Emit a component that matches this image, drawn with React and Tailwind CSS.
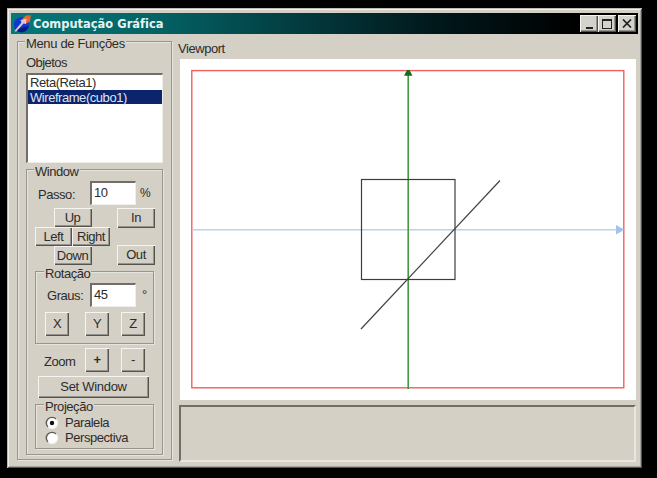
import React from "react";

const raised =
  "shadow-[inset_1px_1px_0_#f5f4f0,inset_-1px_-1px_0_#55534f,inset_-2px_-2px_0_#96938c]";

function Group({ label, className, labelClass, children }) {
  return (
    <div
      className={`flex shrink-0 flex-col items-start border border-[#98958e] shadow-[1px_1px_0_#e6e4de,inset_1px_1px_0_#e6e4de] ${className}`}
    >
      <div className={`-mt-[6px] h-4 bg-[#d4d0c6] leading-4 ${labelClass}`}>{label}</div>
      {children}
    </div>
  );
}

function Btn({ className, children }) {
  return (
    <button
      className={`flex shrink-0 items-center justify-center bg-[#d4d0c6] pb-px leading-none whitespace-nowrap ${raised} ${className}`}
    >
      {children}
    </button>
  );
}

function Field({ value }) {
  return (
    <div className="h-[24px] w-[46px] shrink-0 border-t-2 border-r border-b border-l-2 border-t-[#716e69] border-r-[#f0eeea] border-b-[#f0eeea] border-l-[#716e69] bg-white pl-[2px] leading-[19px]">
      {value}
    </div>
  );
}

function Radio({ checked, children, className }) {
  return (
    <div className={`flex h-[15px] items-center ${className}`}>
      <svg width="14" height="14" viewBox="0 0 14 14" className="mr-[6px]">
        <circle cx="7" cy="7" r="5.5" fill="#fff" />
        <path d="M3 11 A5.6 5.6 0 0 1 11 3" fill="none" stroke="#5d5a55" strokeWidth="1.4" />
        <path d="M11 3 A5.6 5.6 0 0 1 3 11" fill="none" stroke="#f3f1ed" strokeWidth="1.2" />
        {checked && <circle cx="7" cy="7" r="2.2" fill="#111" />}
      </svg>
      <span>{children}</span>
    </div>
  );
}

function TitleBar() {
  const cap = `flex h-[17px] w-[18px] items-center justify-center bg-[#d4d2cc] ${raised}`;
  return (
    <div className="flex h-[21px] items-center bg-[linear-gradient(90deg,#04787a_0%,#046467_22%,#02383c_48%,#01191c_67%,#000_90%)] pr-[2px] pl-[2px]">
      <svg width="19" height="19" viewBox="0 0 19 19">
        <circle cx="8.5" cy="10.7" r="7.6" fill="#1236d2" />
        <path d="M3 16 A7.4 7.4 0 0 0 15.6 12 L11 13Z" fill="#071a86" />
        <path d="M9.5 4.5 L13 1.5 L17.8 1.2 L17 7.5 L13.5 9.5 Z" fill="#f0642c" />
        <path d="M1.5 17 L8.5 8.5 L7.5 6 L13.5 4.5 L13 10 L10.5 9.5 L3 17.8Z" fill="#d9c9d6" />
      </svg>
      <span className="ml-px text-[13px] leading-5 font-bold tracking-[0.02px] text-[#e4f4f3] [font-family:'DejaVu_Sans','Noto_Sans',sans-serif]">
        <span className="inline-block w-[131px] origin-left scale-x-[0.88] whitespace-nowrap">Computação Gráfica</span>
      </span>
      <div className="ml-auto flex">
        <div className={cap}>
          <span className="mt-2 h-[2px] w-[7px] bg-[#222]" />
        </div>
        <div className={cap}>
          <span className="h-[10px] w-[10px] border border-t-2 border-[#222]" />
        </div>
        <div className={`ml-[2px] ${cap}`}>
          <svg width="10" height="9" viewBox="0 0 10 9">
            <path d="M1 0.5 L9 8.5 M9 0.5 L1 8.5" stroke="#222" strokeWidth="1.7" />
          </svg>
        </div>
      </div>
    </div>
  );
}

function Scene() {
  return (
    <svg width="456" height="341" viewBox="180 59 456 341" className="block bg-white">
      <rect x="191.8" y="70.6" width="432" height="317.2" fill="none" stroke="#f0605e" strokeWidth="1.4" />
      <path d="M192 229.8 H618" stroke="#b9d2ee" strokeWidth="1.6" />
      <path d="M616 225 L624.5 229.8 L616 234.6Z" fill="#a3c3ec" />
      <path d="M408.2 74 V389" stroke="#439a43" strokeWidth="1.6" />
      <path d="M404 75.8 L407 70 H409.5 L412.5 75.8Z" fill="#146c1c" />
      <rect x="361.5" y="179.5" width="93.5" height="100" fill="none" stroke="#3c3c3c" strokeWidth="1.2" />
      <path d="M361 329 L500 180.5" stroke="#444" strokeWidth="1.2" />
    </svg>
  );
}

export default function App() {
  return (
    <div className="flex h-[478px] w-[657px] items-start overflow-hidden bg-black pt-2 pl-[7px] text-[13px] tracking-[-0.45px] text-[#2e2c2a] [font-family:'Liberation_Sans',Arial,sans-serif]">
      <div className="flex h-[460px] w-[635px] flex-col bg-[#d4d0c6] px-1 pt-[5px] shadow-[inset_1px_1px_0_#bdbbb7,inset_-1px_-1px_0_#55534f,inset_2px_2px_0_#f1f0ed,inset_-2px_-2px_0_#a7a5a0]">
        <TitleBar />
        <div className="flex items-start pl-[6px]">
          <Group label="Menu de Funções" className="mt-[7px] h-[419px] w-[155px]" labelClass="ml-[7px] px-px tracking-[-0.35px]">
            <div className="mt-[3px] ml-2 h-4 leading-4 tracking-[-0.55px]">Objetos</div>
            <div className="mt-[2px] ml-2 h-[90px] w-[137px] border-t-2 border-r border-b border-l-2 border-t-[#716e69] border-r-[#efede8] border-b-[#efede8] border-l-[#716e69] bg-white">
              <div className="h-[15px] pl-[2px] leading-[16px]">Reta(Reta1)</div>
              <div className="h-[14px] bg-[#0c246c] pl-[2px] leading-[15px] text-[#dfe5f5]">Wireframe(cubo1)</div>
            </div>
            <Group label="Window" className="mt-[6px] ml-2 h-[286px] w-[137px]" labelClass="ml-[7px] px-px">
              <div className="mt-px ml-[11px] flex h-[24px] items-center">
                <span className="w-[52px] pt-[3px]">Passo:</span>
                <Field value="10" />
                <span className="ml-[4px] text-[12px]">%</span>
              </div>
              <div className="mt-[3px] ml-2 flex h-[57px] w-[120px] justify-between">
                <div className="flex w-[75px] flex-col items-center">
                  <Btn className="h-[19px] w-[38px]">Up</Btn>
                  <div className="flex">
                    <Btn className="h-[19px] w-[37px]">Left</Btn>
                    <Btn className="h-[19px] w-[38px]">Right</Btn>
                  </div>
                  <Btn className="h-[19px] w-[38px]">Down</Btn>
                </div>
                <div className="flex flex-col justify-between">
                  <Btn className="h-[20px] w-[38px]">In</Btn>
                  <Btn className="h-[20px] w-[38px]">Out</Btn>
                </div>
              </div>
              <Group label="Rotação" className="mt-[6px] ml-2 h-[73px] w-[119px]" labelClass="ml-2 px-px">
                <div className="mt-px ml-[11px] flex h-[24px] items-center">
                  <span className="w-[43px] pt-px">Graus:</span>
                  <Field value="45" />
                  <span className="ml-[6px]">°</span>
                </div>
                <div className="mt-[5px] ml-[9px] flex">
                  <Btn className="h-[24px] w-[24px]">X</Btn>
                  <Btn className="ml-4 h-[24px] w-[24px]">Y</Btn>
                  <Btn className="ml-3 h-[24px] w-[24px]">Z</Btn>
                </div>
              </Group>
              <div className="mt-[4px] ml-[17px] flex h-6 items-center">
                <span className="w-[41px] pt-[4px]">Zoom</span>
                <Btn className="h-6 w-6 font-bold">+</Btn>
                <Btn className="ml-3 h-6 w-6">-</Btn>
              </div>
              <Btn className="mt-[4px] ml-[11px] h-[22px] w-[111px] tracking-[-0.3px]">Set Window</Btn>
              <Group label="Projeção" className="mt-[6px] ml-2 h-[45px] w-[119px]" labelClass="ml-2 px-px">
                <Radio checked className="ml-[9px]">Paralela</Radio>
                <Radio className="ml-[9px]">Perspectiva</Radio>
              </Group>
            </Group>
          </Group>
          <div className="ml-[7px] flex flex-col pt-[6px]">
            <div className="mt-px mb-[2px] -ml-px h-4 leading-4">Viewport</div>
            <div className="ml-px w-[456px]">
              <Scene />
            </div>
            <div className="mt-[5px] h-[57px] w-[457px] border-t-2 border-r-2 border-b-2 border-l-2 border-t-[#716e69] border-r-[#e8e6e0] border-b-[#e8e6e0] border-l-[#716e69]" />
          </div>
        </div>
      </div>
    </div>
  );
}
